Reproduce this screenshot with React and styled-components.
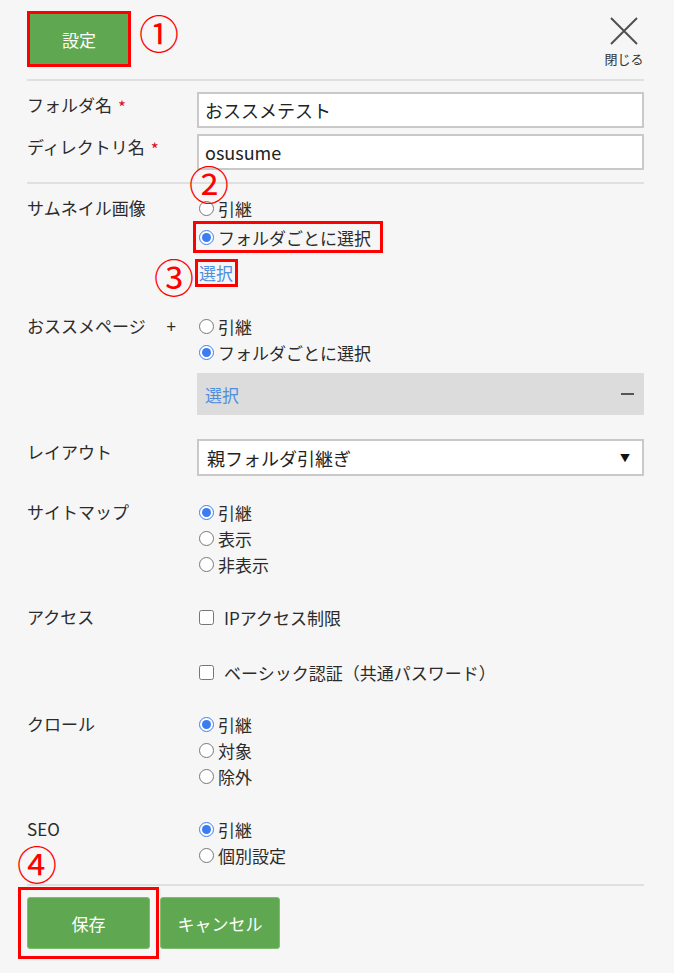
import React from "react";
import styled, { createGlobalStyle } from "styled-components";

const GlobalStyle = createGlobalStyle`
  * { box-sizing: border-box; }
  html, body { margin: 0; padding: 0; background: #f6f6f6; }
  body {
    font-family: "Noto Sans CJK JP", "Noto Sans", sans-serif;
    color: #2b2b2b;
  }
`;

const GREEN = "#5fa851";
const RED = "#ff0000";
const BLUE = "#4f8fe0";

const Page = styled.div`
  position: relative;
  min-height: 973px;
  padding: 0 30px 0 27px;
  background: #f6f6f6;
`;

const Header = styled.header`
  height: 79px;
  display: flex;
  justify-content: space-between;
  align-items: flex-start;
  padding-top: 11px;
`;

const Divider = styled.div`
  height: 2px;
  background: #e0e0e0;
`;

const Highlight = styled.div`
  display: inline-flex;
  border: 3px solid ${RED};
`;

const GreenButton = styled.button`
  width: ${(p) => p.$w}px;
  height: ${(p) => p.$h}px;
  background: ${GREEN};
  color: #fff;
  border: ${(p) => (p.$rounded ? "1px solid #7cbf6e" : "none")};
  border-radius: ${(p) => (p.$rounded ? "3px" : "0")};
  font-family: inherit;
  font-size: 17px;
  padding: 0;
  cursor: pointer;
`;

const CloseButton = styled.button`
  display: flex;
  flex-direction: column;
  align-items: center;
  margin-top: 6px;
  background: none;
  border: none;
  padding: 0;
  width: 40px;
  font-family: inherit;
  font-size: 13px;
  color: #333;
  line-height: 16px;
  svg { display: block; margin-bottom: 6px; }
`;

const NameSection = styled.div`
  padding: 11px 0 12px;
  display: grid;
  grid-template-columns: 170px 1fr;
  row-gap: 6px;
`;

const Label = styled.div`
  font-size: 17px;
  line-height: 26px;
  display: flex;
  align-items: center;
  align-self: start;
  justify-content: ${(p) => (p.$spread ? "space-between" : "flex-start")};
  padding-right: ${(p) => (p.$spread ? "21px" : "0")};
`;

const Req = styled.span`
  color: #e0102a;
  margin-left: 6px;
  font-size: 17px;
  line-height: 26px;
  position: relative;
  top: 2px;
`;

const TextInput = styled.input`
  height: 36px;
  width: 100%;
  border: 2px solid #c9c9c9;
  background: #fff;
  font-family: inherit;
  font-size: 18px;
  color: #222;
  padding: 0 6px;
  outline: none;
`;

const FormSection = styled.div`
  padding: 11px 0 16px;
  display: flex;
  flex-direction: column;
  gap: 25px;
`;

const Row = styled.div`
  display: grid;
  grid-template-columns: 170px 1fr;
  margin-top: ${(p) => p.$mt || 0}px;
`;

const Options = styled.div`
  display: flex;
  flex-direction: column;
  align-items: flex-start;
  gap: ${(p) => p.$gap || 0}px;
`;

const OptionLabel = styled.label`
  display: flex;
  align-items: center;
  height: 26px;
  font-size: 17px;
  color: #2b2b2b;
  white-space: nowrap;
`;

const Radio = styled.input.attrs({ type: "radio" })`
  width: 15px;
  height: 15px;
  margin: 0 4px 0 2px;
  accent-color: #3b7cf0;
`;

const Check = styled.input.attrs({ type: "checkbox" })`
  width: 15px;
  height: 15px;
  margin: 0 10px 0 2px;
`;

const BoxedOption = styled.div`
  display: inline-flex;
  border: 3px solid ${RED};
  margin-left: -4px;
  padding: 0 9px 0 1px;
`;

const LinkBox = styled.a`
  display: inline-block;
  margin-top: 6px;
  margin-left: -2px;
  border: 3px solid ${RED};
  padding: 0 2px 0 1px;
  line-height: 22px;
  font-size: 17px;
  color: ${BLUE};
  text-decoration: none;
`;

const SelectBar = styled.div`
  margin-top: 8px;
  align-self: stretch;
  height: 42px;
  background: #dcdcdc;
  display: flex;
  align-items: center;
  justify-content: space-between;
  padding: 0 10px 0 8px;
  font-size: 17px;
  color: ${BLUE};
`;

const Minus = styled.span`
  display: block;
  width: 13px;
  height: 2px;
  background: #555;
`;

const SelectBox = styled.div`
  height: 37px;
  border: 2px solid #c9c9c9;
  background: #fff;
  display: flex;
  align-items: center;
  justify-content: space-between;
  padding: 0 12px 0 8px;
  font-size: 18px;
  color: #222;
`;

const Arrow = styled.span`
  font-size: 10px;
  color: #111;
`;

const Footer = styled.div`
  padding-top: 11px;
  display: flex;
  align-items: flex-start;
`;

const FooterHighlight = styled.div`
  display: inline-flex;
  border: 3px solid ${RED};
  padding: 7px 6px;
  margin: -10px 1px 0 -9px;
`;

const Circled = styled.span`
  position: absolute;
  left: ${(p) => p.$x}px;
  top: ${(p) => p.$y}px;
  font-size: 40px;
  line-height: 40px;
  color: ${RED};
  font-family: "Noto Sans CJK JP", sans-serif;
  pointer-events: none;
`;

const RadioOpt = ({ name, checked, children }) => (
  <OptionLabel>
    <Radio name={name} defaultChecked={checked} />
    {children}
  </OptionLabel>
);

const CheckOpt = ({ children }) => (
  <OptionLabel>
    <Check />
    {children}
  </OptionLabel>
);

export default function App() {
  return (
    <>
      <GlobalStyle />
      <Page>
        <Header>
          <Highlight>
            <GreenButton $w={98} $h={50}>設定</GreenButton>
          </Highlight>
          <CloseButton>
            <svg width="28" height="28" viewBox="0 0 28 28">
              <path d="M1 1 L27 27 M27 1 L1 27" stroke="#505050" strokeWidth="2" fill="none" />
            </svg>
            閉じる
          </CloseButton>
        </Header>
        <Divider />
        <NameSection>
          <Label>
            フォルダ名<Req>*</Req>
          </Label>
          <TextInput defaultValue="おススメテスト" />
          <Label>
            ディレクトリ名<Req>*</Req>
          </Label>
          <TextInput defaultValue="osusume" />
        </NameSection>
        <Divider />
        <FormSection>
          <Row>
            <Label>サムネイル画像</Label>
            <Options>
              <RadioOpt name="thumb">引継</RadioOpt>
              <BoxedOption>
                <RadioOpt name="thumb" checked>フォルダごとに選択</RadioOpt>
              </BoxedOption>
              <LinkBox href="#">選択</LinkBox>
            </Options>
          </Row>
          <Row $mt={1}>
            <Label $spread>
              <span>おススメページ</span>
              <span>+</span>
            </Label>
            <Options>
              <RadioOpt name="rec">引継</RadioOpt>
              <RadioOpt name="rec" checked>フォルダごとに選択</RadioOpt>
              <SelectBar>
                <span>選択</span>
                <Minus />
              </SelectBar>
            </Options>
          </Row>
          <Row $mt={-1}>
            <Label>レイアウト</Label>
            <SelectBox>
              <span>親フォルダ引継ぎ</span>
              <Arrow>▼</Arrow>
            </SelectBox>
          </Row>
          <Row $mt={-2}>
            <Label>サイトマップ</Label>
            <Options>
              <RadioOpt name="map" checked>引継</RadioOpt>
              <RadioOpt name="map">表示</RadioOpt>
              <RadioOpt name="map">非表示</RadioOpt>
            </Options>
          </Row>
          <Row $mt={2}>
            <Label>アクセス</Label>
            <Options $gap={29}>
              <CheckOpt>IPアクセス制限</CheckOpt>
              <CheckOpt>ベーシック認証（共通パスワード）</CheckOpt>
            </Options>
          </Row>
          <Row $mt={1}>
            <Label>クロール</Label>
            <Options>
              <RadioOpt name="crawl" checked>引継</RadioOpt>
              <RadioOpt name="crawl">対象</RadioOpt>
              <RadioOpt name="crawl">除外</RadioOpt>
            </Options>
          </Row>
          <Row $mt={2}>
            <Label>SEO</Label>
            <Options>
              <RadioOpt name="seo" checked>引継</RadioOpt>
              <RadioOpt name="seo">個別設定</RadioOpt>
            </Options>
          </Row>
        </FormSection>
        <Divider />
        <Footer>
          <FooterHighlight>
            <GreenButton $w={123} $h={52} $rounded>保存</GreenButton>
          </FooterHighlight>
          <GreenButton $w={120} $h={52} $rounded>キャンセル</GreenButton>
        </Footer>
        <Circled $x={139} $y={12}>①</Circled>
        <Circled $x={189} $y={163}>②</Circled>
        <Circled $x={154} $y={256}>③</Circled>
        <Circled $x={17} $y={843}>④</Circled>
      </Page>
    </>
  );
}
